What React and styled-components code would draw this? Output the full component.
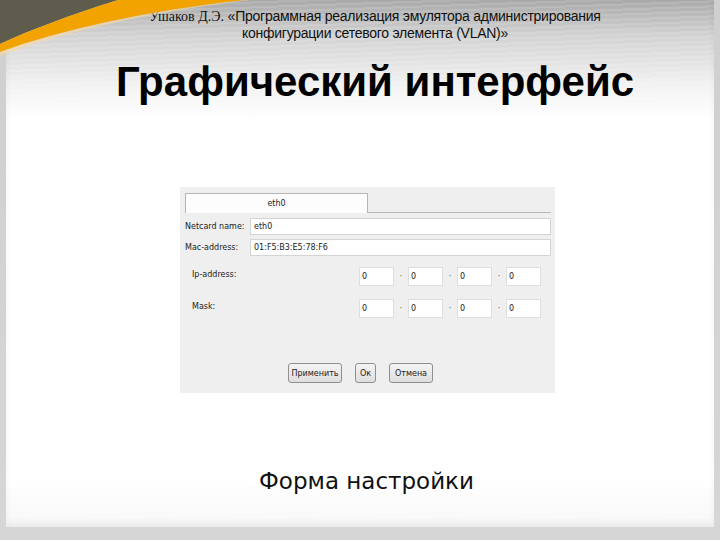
import React from "react";
import styled, { createGlobalStyle } from "styled-components";

const Global = createGlobalStyle`
  html, body { margin: 0; padding: 0; background: #c9c9c9; overflow: hidden; }
`;

const Slide = styled.div`
  position: relative;
  width: 720px;
  height: 540px;
  box-sizing: border-box;
  padding: 0 6px 13px 6px;
  background: linear-gradient(#cfcfcf, #d6d6d6);
  display: flex;
`;

const Inner = styled.div`
  flex: 1;
  display: flex;
  flex-direction: column;
  align-items: center;
  background:
    repeating-linear-gradient(178deg, rgba(255,255,255,0.12) 0 2px, rgba(0,0,0,0.0) 2px 5px),
    linear-gradient(#a9a9a9 0px, #d2d2d2 35px, #f2f2f2 85px, #ffffff 120px, #ffffff 480px, #f7f7f7 525px);
  box-shadow: inset 0 -4px 6px rgba(0,0,0,0.06);
`;

const Corner = styled.svg`
  position: absolute;
  left: 0;
  top: 0;
`;

const Subtitle = styled.div`
  margin-top: 8px;
  margin-left: 30px;
  text-align: center;
  font-family: "Liberation Sans Narrow", "Liberation Sans", sans-serif;
  font-size: 14px;
  letter-spacing: -0.25px;
  line-height: 16px;
  color: #111;
`;

const SerifName = styled.span`
  font-family: "Liberation Serif", serif;
  font-size: 14px;
  letter-spacing: 0;
`;

const Title = styled.h1`
  margin: 17px 0 0 30px;
  font-family: "Liberation Sans", Arial, sans-serif;
  font-weight: bold;
  font-size: 42px;
  line-height: 48px;
  color: #000;
`;

const Panel = styled.div`
  margin-top: 81px;
  margin-left: 15px;
  width: 375px;
  height: 206px;
  box-sizing: border-box;
  padding: 6px 4px 0 5px;
  background: #efefef;
  font-family: "DejaVu Sans", Tahoma, sans-serif;
  font-size: 8px;
  color: #222;
  display: flex;
  flex-direction: column;
`;

const TabBar = styled.div`
  display: flex;
  height: 19px;
  border-bottom: 1px solid #b9b9b9;
`;

const Tab = styled.div`
  width: 181px;
  border: 1px solid #b4b4b4;
  border-bottom: none;
  background: #fdfdfd;
  display: flex;
  align-items: center;
  justify-content: center;
  margin-bottom: -1px;
`;

const FieldRow = styled.div`
  display: flex;
  align-items: center;
  margin-top: ${(p) => p.$top}px;
`;

const FieldLabel = styled.div`
  width: 65px;
`;

const TextField = styled.div`
  flex: 1;
  height: 15px;
  border: 1px solid #d4d4d4;
  background: #fff;
  display: flex;
  align-items: center;
  padding-left: 3px;
`;

const IpRow = styled.div`
  display: flex;
  align-items: center;
  margin-top: ${(p) => p.$top}px;
  padding-left: 7px;
`;

const IpLabel = styled.div`
  width: 167px;
  align-self: flex-start;
  margin-top: 3px;
`;

const Octet = styled.div`
  width: 31px;
  height: 17px;
  border: 1px solid #dedede;
  background: #fff;
  display: flex;
  align-items: center;
  padding-left: 2px;
  box-sizing: content-box;
`;

const Dot = styled.div`
  width: 14px;
  text-align: center;
  font-size: 8px;
  color: #555;
`;

const Buttons = styled.div`
  display: flex;
  margin-top: 45px;
  padding-left: 103px;
  gap: 13px;
`;

const Button = styled.div`
  width: ${(p) => p.$w}px;
  height: 18px;
  border: 1px solid #8f8f8f;
  border-radius: 3px;
  background: linear-gradient(#f4f4f4, #dedede);
  display: flex;
  align-items: center;
  justify-content: center;
`;

const Caption = styled.div`
  margin-top: 75px;
  margin-left: 13px;
  font-family: "DejaVu Sans", Verdana, sans-serif;
  font-size: 23px;
  color: #111;
`;

function IpLine({ label, top }) {
  return (
    <IpRow $top={top}>
      <IpLabel>{label}</IpLabel>
      <Octet>0</Octet>
      <Dot>·</Dot>
      <Octet>0</Octet>
      <Dot>·</Dot>
      <Octet>0</Octet>
      <Dot>·</Dot>
      <Octet>0</Octet>
    </IpRow>
  );
}

export default function App() {
  return (
    <>
      <Global />
      <Slide>
        <Inner>
          <Subtitle>
            <SerifName>Ушаков Д.Э.</SerifName> «Программная реализация эмулятора администрирования
            <br />
            конфигурации сетевого элемента (VLAN)»
          </Subtitle>
          <Title>Графический интерфейс</Title>
          <Panel>
            <TabBar>
              <Tab>eth0</Tab>
            </TabBar>
            <FieldRow $top={5}>
              <FieldLabel>Netcard name:</FieldLabel>
              <TextField>eth0</TextField>
            </FieldRow>
            <FieldRow $top={4}>
              <FieldLabel>Mac-address:</FieldLabel>
              <TextField>01:F5:B3:E5:78:F6</TextField>
            </FieldRow>
            <IpLine label="Ip-address:" top={11} />
            <IpLine label="Mask:" top={13} />
            <Buttons>
              <Button $w={52}>Применить</Button>
              <Button $w={19}>Ок</Button>
              <Button $w={42}>Отмена</Button>
            </Buttons>
          </Panel>
          <Caption>Форма настройки</Caption>
        </Inner>
        <Corner width="250" height="60" viewBox="0 0 250 60">
          <path d="M0 0 L118 0 C70 15 30 30 0 44 Z" fill="#5e5d4d" />
          <path d="M118 0 L245 0 C150 10 60 30 0 52 L0 44 C30 30 70 15 118 0 Z" fill="#f2a300" />
          <path d="M245 0 L250 0 C150 12 60 33 0 56 L0 52 C60 30 150 10 245 0 Z" fill="#f6d9a0" opacity="0.6" />
        </Corner>
      </Slide>
    </>
  );
}
